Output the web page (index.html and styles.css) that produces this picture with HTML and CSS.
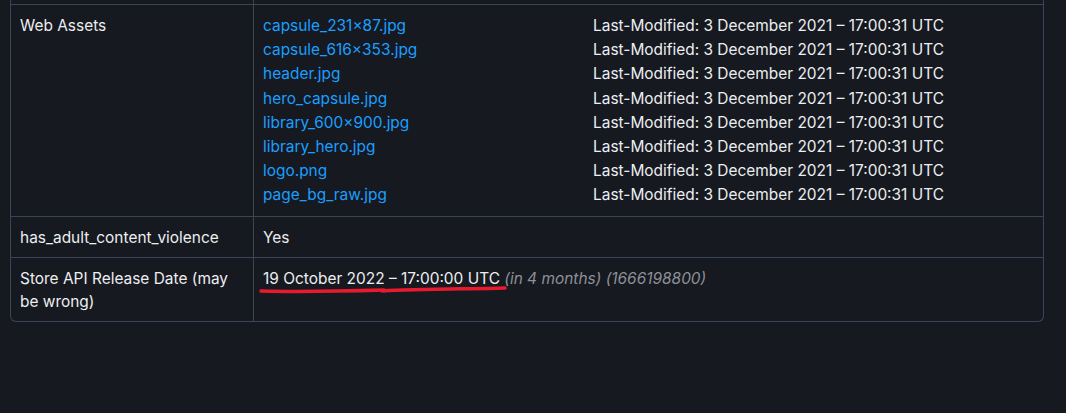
FILE: index.html
```html
<!DOCTYPE html>
<html lang="en">
<head>
  <meta charset="UTF-8">
  <title>App Info</title>
  <link rel="stylesheet" href="styles.css">
</head>
<body>
  <div class="table-wrap">
    <table class="info-table">
      <tr class="clip-row">
        <td></td>
        <td></td>
      </tr>
      <tr>
        <td>Web Assets</td>
        <td>
          <div class="assets">
            <a href="#">capsule_231×87.jpg</a><span>Last-Modified: 3 December 2021 – 17:00:31 UTC</span>
            <a href="#">capsule_616×353.jpg</a><span>Last-Modified: 3 December 2021 – 17:00:31 UTC</span>
            <a href="#">header.jpg</a><span>Last-Modified: 3 December 2021 – 17:00:31 UTC</span>
            <a href="#">hero_capsule.jpg</a><span>Last-Modified: 3 December 2021 – 17:00:31 UTC</span>
            <a href="#">library_600×900.jpg</a><span>Last-Modified: 3 December 2021 – 17:00:31 UTC</span>
            <a href="#">library_hero.jpg</a><span>Last-Modified: 3 December 2021 – 17:00:31 UTC</span>
            <a href="#">logo.png</a><span>Last-Modified: 3 December 2021 – 17:00:31 UTC</span>
            <a href="#">page_bg_raw.jpg</a><span>Last-Modified: 3 December 2021 – 17:00:31 UTC</span>
          </div>
        </td>
      </tr>
      <tr>
        <td>has_adult_content_violence</td>
        <td>Yes</td>
      </tr>
      <tr>
        <td>Store API Release Date (may be wrong)</td>
        <td>
          <span class="marked">19 October 2022 – 17:00:00 UTC
            <svg class="scribble" width="252" height="10" viewBox="0 0 252 10">
              <path d="M2 7 C 40 8, 90 7, 125 6" stroke="#ea1a2e" stroke-width="3.5" fill="none" stroke-linecap="round"/>
              <path d="M123 7 C 160 5, 212 5, 246 4" stroke="#ea1a2e" stroke-width="3.5" fill="none" stroke-linecap="round"/>
            </svg>
          </span>
          <i class="muted">(in 4 months) (1666198800)</i>
        </td>
      </tr>
    </table>
  </div>
</body>
</html>
```

FILE: styles.css
```css
body {
  margin: 0;
  padding: 0 10px;
  background: #16191f;
  color: #eceef1;
  font-family: Inter, "Noto Sans", sans-serif;
  font-size: 15.45px;
  line-height: 23px;
}

.table-wrap {
  width: 1032px;
  border: 1px solid #3b4558;
  border-top: none;
  border-radius: 0 0 6px 6px;
  overflow: hidden;
}

.info-table {
  width: 100%;
  border-collapse: collapse;
}

.info-table td {
  border-top: 1px solid #3b4558;
  padding: 9px 10px 8px 9px;
  vertical-align: top;
}

.info-table td:first-child {
  width: 223px;
  border-right: 1px solid #3b4558;
}

.info-table .clip-row td {
  border-top: none;
  padding: 0;
  height: 4px;
}

.assets {
  display: grid;
  grid-template-columns: 330px auto;
  line-height: 24.2px;
}

.assets a {
  color: #1a9fff;
  text-decoration: none;
}

.marked {
  position: relative;
}

.scribble {
  position: absolute;
  left: -4px;
  top: 15px;
}

.muted {
  color: #8c9097;
}
```
